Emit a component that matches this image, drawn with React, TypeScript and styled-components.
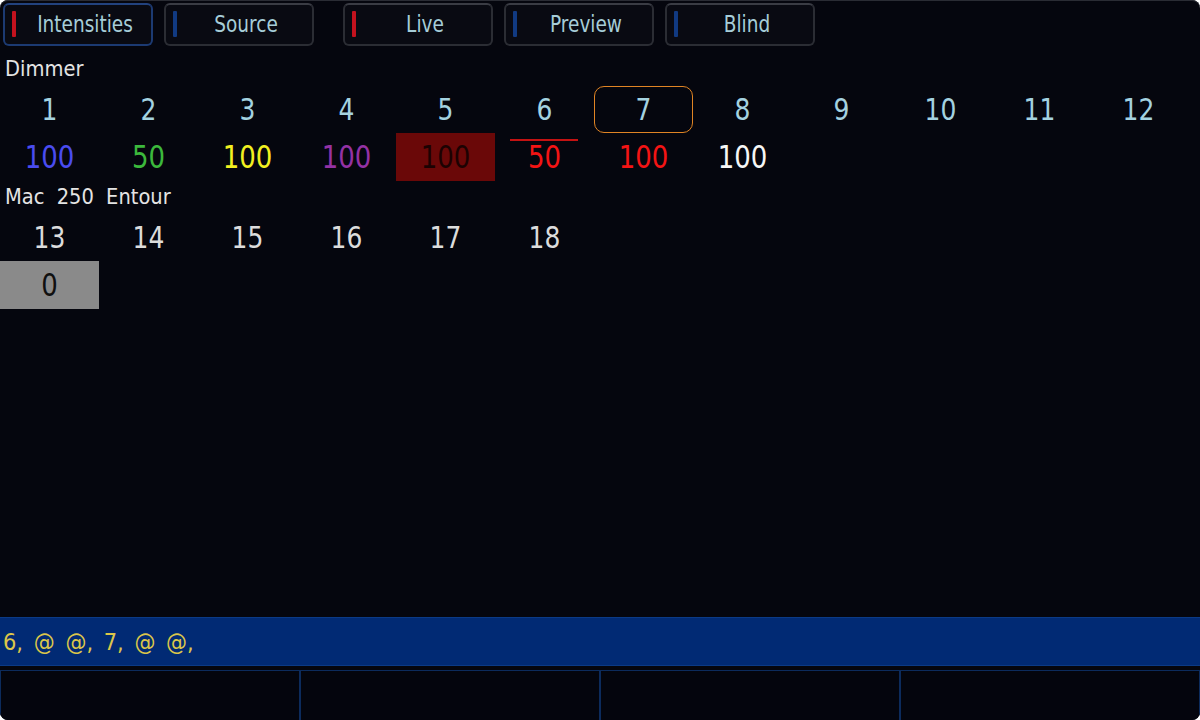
import * as React from 'react';
import styled, { createGlobalStyle } from 'styled-components';

const GlobalStyle = createGlobalStyle`
  html, body {
    margin: 0;
    padding: 0;
    background: #ffffff;
  }
  body {
    font-family: 'DejaVu Sans', 'Liberation Sans', sans-serif;
  }
`;

const Screen = styled.div`
  width: 1200px;
  height: 720px;
  display: flex;
  flex-direction: column;
  background: #05060e;
  border-radius: 8px;
  box-shadow: inset 0 1px 0 #2a2c34;
  overflow: hidden;
`;

const TabBar = styled.div`
  height: 52px;
  display: flex;
  align-items: flex-start;
  padding: 3px 0 0 3px;
  box-sizing: border-box;
`;

const TabGroup = styled.div`
  display: flex;
  gap: 11px;
  margin-right: 29px;
`;

const Tab = styled.div<{ $selected?: boolean }>`
  position: relative;
  width: 150px;
  height: 43px;
  box-sizing: border-box;
  display: flex;
  align-items: center;
  justify-content: center;
  padding: 0 0 3px 14px;
  border: 2px solid ${p => (p.$selected ? '#1c3a72' : '#2b2d34')};
  border-top-color: ${p => (p.$selected ? '#22427e' : '#3a3c44')};
  border-radius: 6px;
  background: #090a12;
`;

const Indicator = styled.span<{ $color: string }>`
  position: absolute;
  left: 7px;
  top: 6px;
  width: 4px;
  height: 26px;
  border-radius: 1px;
  background: ${p => p.$color};
`;

const TabLabel = styled.span`
  display: inline-block;
  color: #a6cdd8;
  font-size: 18.5px;
  transform: scaleY(1.24);
`;

const Channels = styled.div`
  flex: 1;
  display: flex;
  flex-direction: column;
`;

const GroupLabel = styled.div<{ $height: number }>`
  height: ${p => p.$height}px;
  display: flex;
  align-items: center;
  padding: 0 0 2px 5px;
  box-sizing: border-box;
  color: #e4e4e4;
  font-size: 19.5px;
  word-spacing: 6px;

  span {
    display: inline-block;
    transform: scaleY(1.1);
  }
`;

const Row = styled.div<{ $height: number }>`
  display: grid;
  grid-template-columns: repeat(12, 99px);
  height: ${p => p.$height}px;
`;

const NumberCell = styled.div<{ $color: string; $focused?: boolean }>`
  display: flex;
  align-items: center;
  justify-content: center;
  box-sizing: border-box;
  padding-bottom: 1px;
  color: ${p => p.$color};
  font-size: 25px;
  border: 1.5px solid ${p => (p.$focused ? '#e08424' : 'transparent')};
  border-radius: 10px;

  span {
    display: inline-block;
    transform: scaleY(1.2);
  }
`;

const ValueCell = styled.div<{ $color: string; $bg?: string; $marked?: boolean }>`
  position: relative;
  display: flex;
  align-items: center;
  justify-content: center;
  padding-bottom: 1px;
  color: ${p => p.$color};
  background: ${p => p.$bg || 'transparent'};
  font-size: 26px;

  span {
    display: inline-block;
    transform: scaleY(1.2);
  }

  &::before {
    content: '';
    display: ${p => (p.$marked ? 'block' : 'none')};
    position: absolute;
    left: 15px;
    right: 16px;
    top: 6px;
    height: 2px;
    background: #c41212;
  }
`;

const CommandLine = styled.div`
  height: 49px;
  margin: 0 0 4px;
  box-sizing: border-box;
  display: flex;
  align-items: center;
  padding-left: 3px;
  background: #012a74;
  border-top: 1px solid #0b3a86;
  border-bottom: 1px solid #0b3a86;
  color: #dcc64a;
  font-size: 21px;
  word-spacing: 4px;

  span {
    display: inline-block;
    transform: scaleY(1.12);
  }
`;

const SoftKeys = styled.div`
  height: 50px;
  display: grid;
  grid-template-columns: repeat(4, 1fr);
`;

const SoftKey = styled.div`
  border: 1.5px solid #0c2b5c;
  border-bottom: none;
  box-sizing: border-box;
  background: #04050d;
`;

type Chan = { n: number; value?: string; color?: string; bg?: string; marked?: boolean; focused?: boolean };

const dimmers: Chan[] = [
  { n: 1, value: '100', color: '#4a4cf0' },
  { n: 2, value: '50', color: '#3cb83c' },
  { n: 3, value: '100', color: '#f2f020' },
  { n: 4, value: '100', color: '#9432a4' },
  { n: 5, value: '100', color: '#1c0202', bg: '#6a0808' },
  { n: 6, value: '50', color: '#f41414', marked: true },
  { n: 7, value: '100', color: '#f41414', focused: true },
  { n: 8, value: '100', color: '#f6f6f6' },
  { n: 9 },
  { n: 10 },
  { n: 11 },
  { n: 12 },
];

const movers: Chan[] = [
  { n: 13, value: '0', color: '#101010', bg: '#8a8a8a' },
  { n: 14 },
  { n: 15 },
  { n: 16 },
  { n: 17 },
  { n: 18 },
];

const tabGroups = [
  [
    { label: 'Intensities', bar: '#c3121e', selected: true },
    { label: 'Source', bar: '#113a82' },
  ],
  [
    { label: 'Live', bar: '#c3121e' },
    { label: 'Preview', bar: '#113a82' },
    { label: 'Blind', bar: '#113a82' },
  ],
];

const ChannelBlock = ({ label, chans, numColor, first }: { label: string; chans: Chan[]; numColor: string; first?: boolean }) => (
  <>
    <GroupLabel $height={first ? 34 : 33}><span>{label}</span></GroupLabel>
    <Row $height={47}>
      {chans.map(c => (
        <NumberCell key={c.n} $color={numColor} $focused={c.focused}><span>{c.n}</span></NumberCell>
      ))}
    </Row>
    <Row $height={48}>
      {chans.map(c => (
        <ValueCell key={c.n} $color={c.color || '#fff'} $bg={c.bg} $marked={c.marked}>
          {c.value && <span>{c.value}</span>}
        </ValueCell>
      ))}
    </Row>
  </>
);

const App = () => {
  return (
    <>
      <GlobalStyle />
      <Screen>
        <TabBar>
          {tabGroups.map((group, i) => (
            <TabGroup key={i}>
              {group.map(t => (
                <Tab key={t.label} $selected={t.selected}>
                  <Indicator $color={t.bar} />
                  <TabLabel>{t.label}</TabLabel>
                </Tab>
              ))}
            </TabGroup>
          ))}
        </TabBar>
        <Channels>
          <ChannelBlock label='Dimmer' chans={dimmers} numColor='#a4d2e0' first />
          <ChannelBlock label='Mac 250 Entour' chans={movers} numColor='#dcdcdc' />
        </Channels>
        <CommandLine><span>6, @ @, 7, @ @,</span></CommandLine>
        <SoftKeys>
          <SoftKey />
          <SoftKey />
          <SoftKey />
          <SoftKey />
        </SoftKeys>
      </Screen>
    </>
  );
};

export default App;
